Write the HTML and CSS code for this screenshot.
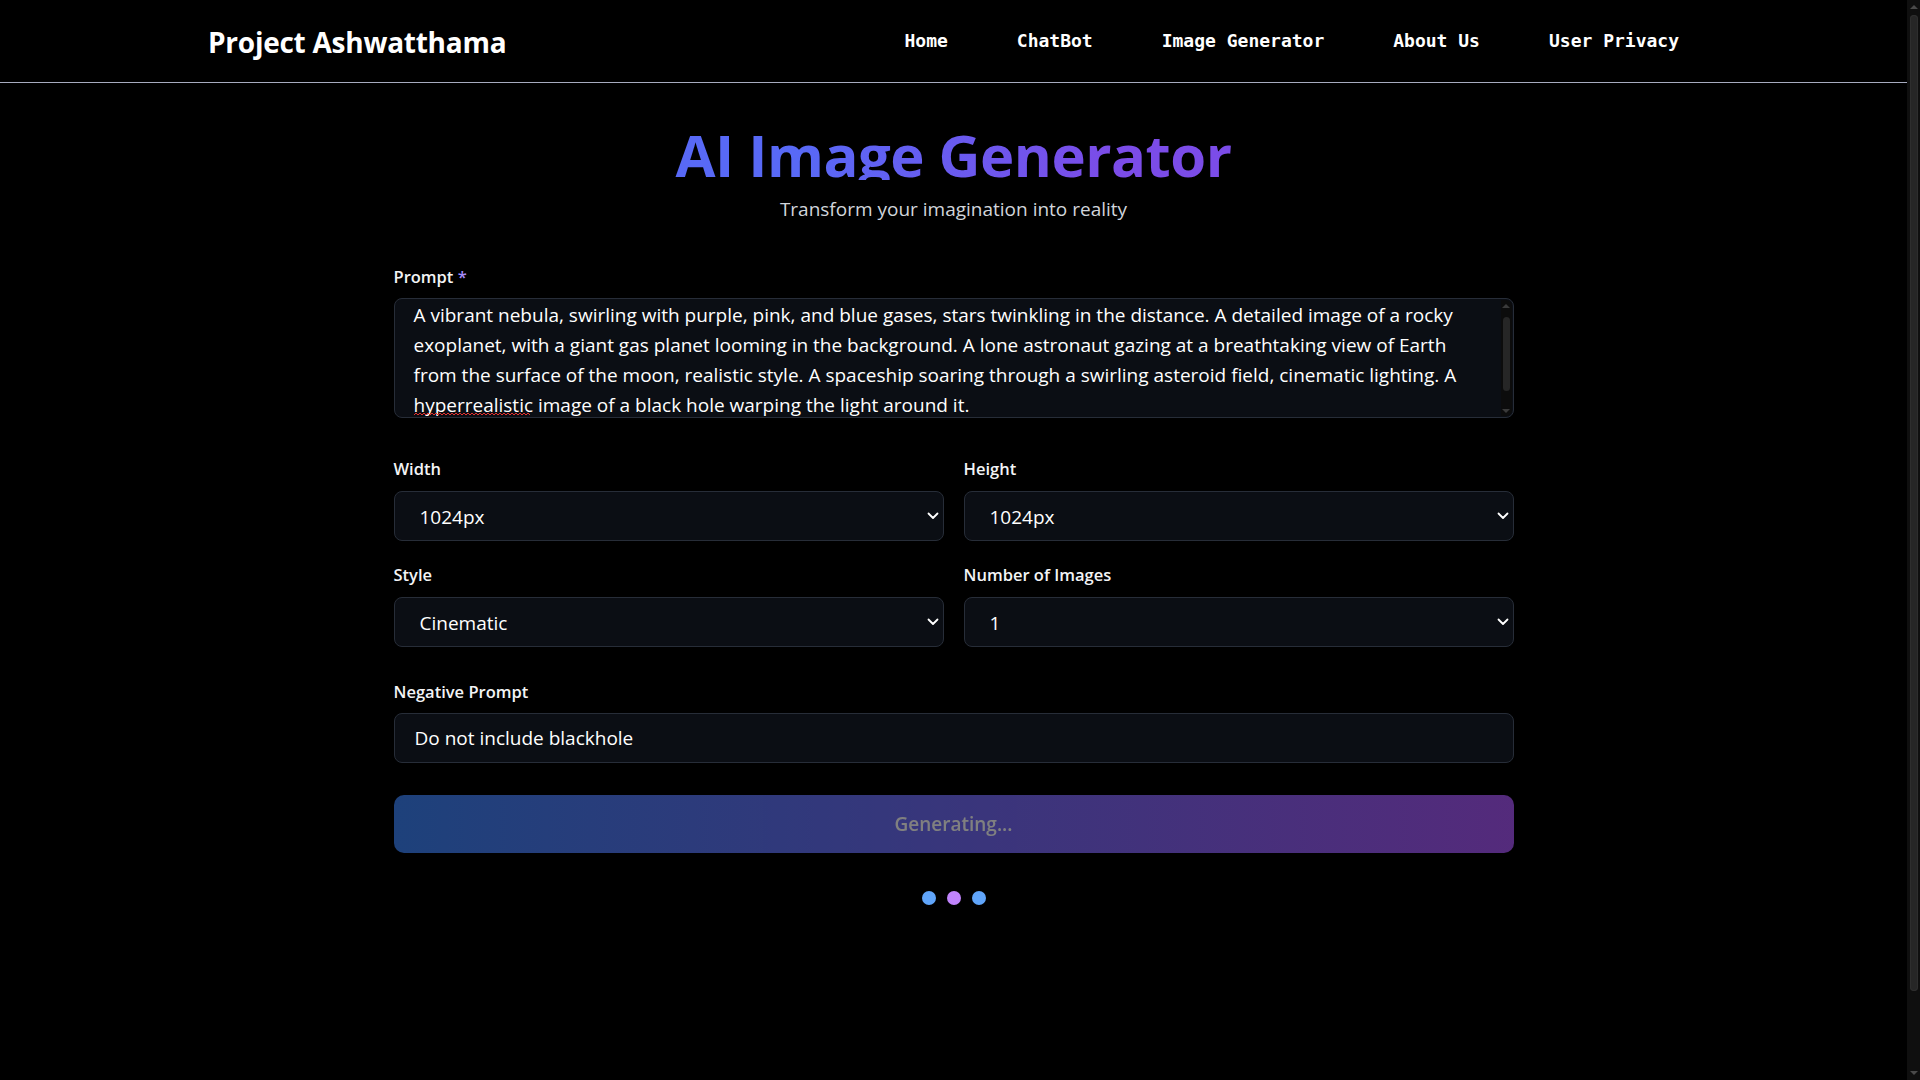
FILE: index.html
```html
<!DOCTYPE html>
<html lang="en">
<head>
<meta charset="utf-8">
<title>AI Image Generator - Project Ashwatthama</title>
<link rel="stylesheet" href="styles.css">
</head>
<body>
<div class="page">
  <header class="topbar">
    <div class="logo">Project Ashwatthama</div>
    <nav class="nav">
      <a href="#">Home</a>
      <a href="#">ChatBot</a>
      <a href="#">Image Generator</a>
      <a href="#">About Us</a>
      <a href="#">User Privacy</a>
    </nav>
  </header>

  <main class="main">
    <h1 class="title">AI Image Generator</h1>
    <p class="subtitle">Transform your imagination into reality</p>

    <form class="form">
      <div class="group">
        <label class="label">Prompt <span class="req">*</span></label>
        <div class="ta-wrap">
          <textarea class="textarea" spellcheck="false">A vibrant nebula, swirling with purple, pink, and blue gases, stars twinkling in the distance. A detailed image of a rocky
exoplanet, with a giant gas planet looming in the background. A lone astronaut gazing at a breathtaking view of Earth
from the surface of the moon, realistic style. A spaceship soaring through a swirling asteroid field, cinematic lighting. A
hyperrealistic image of a black hole warping the light around it.</textarea>
          <svg class="squiggle" width="117" height="4" viewBox="0 0 117 4"><polyline fill="none" stroke="#e5312f" stroke-width="1" points="0,3 2,1 4,3 6,1 8,3 10,1 12,3 14,1 16,3 18,1 20,3 22,1 24,3 26,1 28,3 30,1 32,3 34,1 36,3 38,1 40,3 42,1 44,3 46,1 48,3 50,1 52,3 54,1 56,3 58,1 60,3 62,1 64,3 66,1 68,3 70,1 72,3 74,1 76,3 78,1 80,3 82,1 84,3 86,1 88,3 90,1 92,3 94,1 96,3 98,1 100,3 102,1 104,3 106,1 108,3 110,1 112,3 114,1 116,3"/></svg>
          <div class="ta-sb">
            <span class="sb-up"></span>
            <span class="sb-thumb"></span>
            <span class="sb-down"></span>
          </div>
        </div>
      </div>

      <div class="grid">
        <div class="group">
          <label class="label">Width</label>
          <div class="select-wrap">
            <select class="select"><option>1024px</option></select>
            <svg class="chev" viewBox="0 0 12 8" width="12" height="8"><path d="M1.5 1.5 L6 6 L10.5 1.5" fill="none" stroke="#fff" stroke-width="1.8" stroke-linecap="round" stroke-linejoin="round"/></svg>
          </div>
        </div>
        <div class="group">
          <label class="label">Height</label>
          <div class="select-wrap">
            <select class="select"><option>1024px</option></select>
            <svg class="chev" viewBox="0 0 12 8" width="12" height="8"><path d="M1.5 1.5 L6 6 L10.5 1.5" fill="none" stroke="#fff" stroke-width="1.8" stroke-linecap="round" stroke-linejoin="round"/></svg>
          </div>
        </div>
        <div class="group">
          <label class="label">Style</label>
          <div class="select-wrap">
            <select class="select"><option>Cinematic</option></select>
            <svg class="chev" viewBox="0 0 12 8" width="12" height="8"><path d="M1.5 1.5 L6 6 L10.5 1.5" fill="none" stroke="#fff" stroke-width="1.8" stroke-linecap="round" stroke-linejoin="round"/></svg>
          </div>
        </div>
        <div class="group">
          <label class="label">Number of Images</label>
          <div class="select-wrap">
            <select class="select"><option>1</option></select>
            <svg class="chev" viewBox="0 0 12 8" width="12" height="8"><path d="M1.5 1.5 L6 6 L10.5 1.5" fill="none" stroke="#fff" stroke-width="1.8" stroke-linecap="round" stroke-linejoin="round"/></svg>
          </div>
        </div>
      </div>

      <div class="group group-neg">
        <label class="label">Negative Prompt</label>
        <input class="input" type="text" value="Do not include blackhole" spellcheck="false">
      </div>

      <button class="btn" type="button" disabled>Generating...</button>
    </form>

    <div class="dots">
      <span class="dot dot-blue"></span>
      <span class="dot dot-purple"></span>
      <span class="dot dot-blue"></span>
    </div>
  </main>
</div>
<div class="vscroll">
  <span class="vs-up"></span>
  <span class="vs-thumb"></span>
  <span class="vs-down"></span>
</div>
</body>
</html>
```

FILE: styles.css
```css
html, body {
  height: 100%;
}
html {
  color-scheme: dark;
  background: #000;
}
body {
  margin: 0;
  background: #000;
  color: #fff;
  font-family: "Open Sans", "Noto Sans", sans-serif;
  display: flex;
  overflow: hidden;
}
.page {
  flex: 1;
  min-width: 0;
}

/* fake page scrollbar */
.vscroll {
  width: 13px;
  height: 100vh;
  background: #0f0f0f;
  display: flex;
  flex-direction: column;
  align-items: center;
  flex-shrink: 0;
}
.vs-up, .vs-down {
  width: 0;
  height: 0;
  border-left: 4px solid transparent;
  border-right: 4px solid transparent;
}
.vs-up {
  margin-top: 5px;
  border-bottom: 4px solid #4a4a4a;
}
.vs-down {
  margin-bottom: 5px;
  border-top: 4px solid #4a4a4a;
}
.vs-thumb {
  flex: 1;
  width: 8px;
  margin: 6px 0 80px;
  border-radius: 4px;
  background: #262626;
  box-shadow: inset 0 0 0 1px #2e2e2e;
}

.topbar {
  height: 82px;
  border-bottom: 1px solid #a7abbf;
  display: flex;
  align-items: center;
  justify-content: space-between;
  padding: 0 228px 0 208px;
}
.logo {
  font-size: 28px;
  font-weight: 700;
  letter-spacing: -0.25px;
  padding-top: 2px;
}
.nav {
  display: flex;
  gap: 69px;
  padding-bottom: 2px;
}
.nav a {
  font-family: "DejaVu Sans Mono", "Liberation Mono", monospace;
  font-weight: 700;
  font-size: 18px;
  color: #fff;
  text-decoration: none;
}
.main {
  width: 1120px;
  margin: 0 auto;
}
.title {
  margin: 43px 0 0;
  text-align: center;
  font-size: 58px;
  line-height: 1;
  height: 54px;
  font-weight: 700;
  letter-spacing: -0.5px;
  background: linear-gradient(90deg, #5869f6 36%, #7b4ce8 64%);
  -webkit-background-clip: text;
  background-clip: text;
  color: transparent;
}
.subtitle {
  margin: 16px 0 0;
  text-align: center;
  font-size: 19px;
  line-height: 26px;
  color: #d1d5db;
}
.form {
  margin-top: 43px;
}
.group {
  display: flex;
  flex-direction: column;
  gap: 9px;
}
.label {
  font-size: 16.5px;
  line-height: 24px;
  font-weight: 600;
  color: #f3f4f6;
}
.req {
  color: #a78bfa;
}
.ta-wrap {
  position: relative;
  height: 120px;
}
.textarea {
  box-sizing: border-box;
  width: 100%;
  height: 120px;
  resize: none;
  background: #0b0e14;
  border: 1px solid #272d38;
  border-radius: 8px;
  color: #fff;
  font-family: "Open Sans", "Noto Sans", sans-serif;
  font-size: 19px;
  line-height: 30px;
  padding: 1px 20px 16px 19px;
  outline: none;
  white-space: pre;
  overflow: hidden;
  display: block;
}
.squiggle {
  position: absolute;
  left: 20px;
  top: 114px;
}
.ta-sb {
  position: absolute;
  top: 2px;
  bottom: 2px;
  right: 2px;
  width: 11px;
  background: #0c0c0c;
  display: flex;
  flex-direction: column;
  align-items: center;
  border-radius: 0 6px 6px 0;
}
.sb-up, .sb-down {
  width: 0;
  height: 0;
  border-left: 4px solid transparent;
  border-right: 4px solid transparent;
}
.sb-up {
  margin-top: 4px;
  border-bottom: 4px solid #3a3a3a;
}
.sb-down {
  margin-bottom: 3px;
  border-top: 4px solid #3a3a3a;
}
.sb-thumb {
  width: 7px;
  height: 74px;
  margin: 9px 0 auto;
  border-radius: 4px;
  background: #262626;
}
.grid {
  margin-top: 39px;
  display: grid;
  grid-template-columns: 1fr 1fr;
  column-gap: 20px;
  row-gap: 22px;
}
.grid .group {
  gap: 10px;
}
.select-wrap {
  position: relative;
}
.select {
  appearance: none;
  -webkit-appearance: none;
  box-sizing: border-box;
  width: 100%;
  height: 50px;
  background: #0b0e14;
  border: 1px solid #272d38;
  border-radius: 8px;
  color: #fff;
  font-family: "Open Sans", "Noto Sans", sans-serif;
  font-size: 19px;
  padding: 1px 25px 0;
  outline: none;
}
.chev {
  position: absolute;
  right: 5px;
  top: 21px;
  pointer-events: none;
}
.group-neg {
  margin-top: 33px;
}
.input {
  box-sizing: border-box;
  height: 50px;
  background: #0b0e14;
  border: 1px solid #272d38;
  border-radius: 8px;
  color: #fff;
  font-family: "Open Sans", "Noto Sans", sans-serif;
  font-size: 19px;
  padding: 0 20px;
  outline: none;
}
.btn {
  display: block;
  width: 100%;
  margin-top: 32px;
  height: 58px;
  border: none;
  border-radius: 10px;
  background: linear-gradient(90deg, #3b82f6, #a855f7);
  opacity: 0.5;
  color: #fff;
  font-family: "Open Sans", "Noto Sans", sans-serif;
  font-size: 19px;
  font-weight: 600;
}
.dots {
  margin-top: 38px;
  display: flex;
  justify-content: center;
  gap: 11px;
}
.dot {
  width: 14px;
  height: 14px;
  border-radius: 50%;
}
.dot-blue {
  background: #60a5fa;
}
.dot-purple {
  background: #c084fc;
}
```
